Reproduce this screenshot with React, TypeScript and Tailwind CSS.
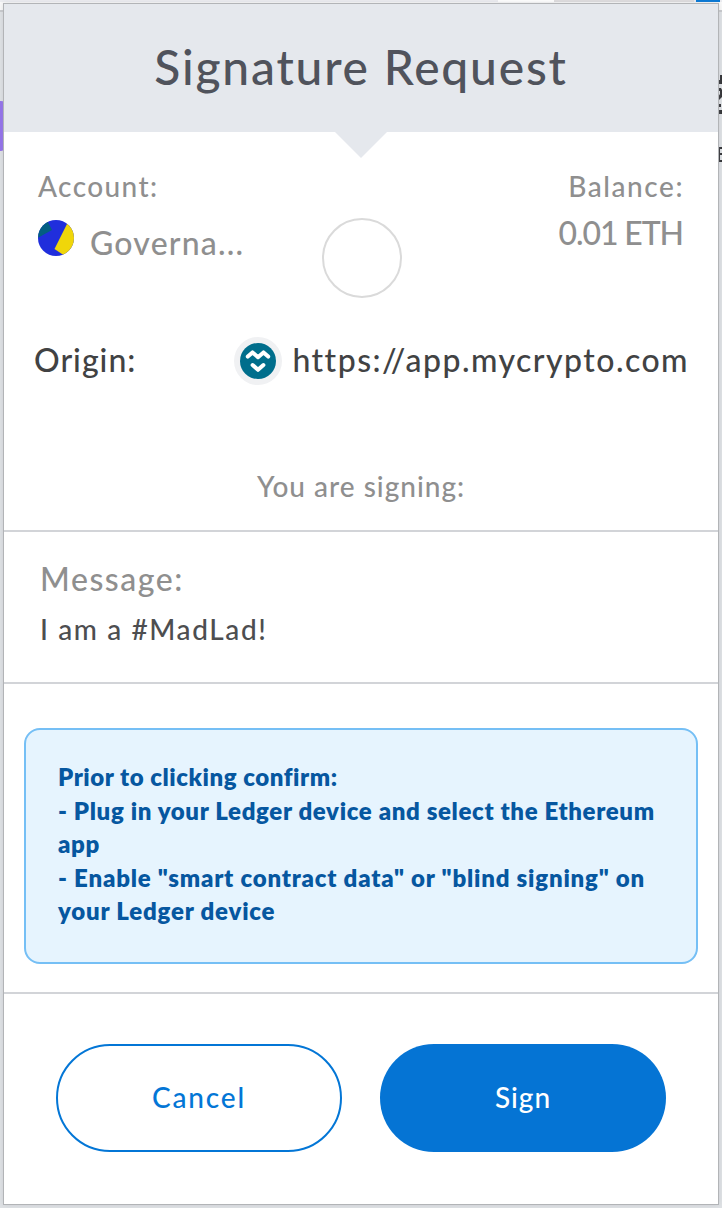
import React from "react";

function AccountIcon() {
  return (
    <svg width="36" height="36" viewBox="0 0 36 36" className="mt-[5px] shrink-0">
      <defs>
        <clipPath id="account-circle">
          <circle cx="18" cy="18" r="18" />
        </clipPath>
      </defs>
      <g clipPath="url(#account-circle)">
        <rect width="36" height="36" fill="#202edc" />
        <path d="M-4 20 L14 10 L8 -2 L-4 -2Z" fill="#035e82" />
        <path d="M29.500 3 L16.500 29 L27 36 L40 36 L40 3Z" fill="#f0d60a" />
      </g>
    </svg>
  );
}

function SiteIcon() {
  return (
    <svg width="48" height="48" viewBox="0 0 48 48" className="shrink-0">
      <circle cx="24" cy="24" r="24" fill="#f0f1f3" />
      <circle cx="24" cy="24" r="18" fill="#006e8c" />
      <g fill="none" stroke="#fff" strokeWidth="4" strokeLinecap="round" strokeLinejoin="round">
        <path d="M13.800 19.600 L18.500 15.400 L24 20.200 L29.500 15.400 L34.200 19.600" />
        <path d="M18.600 28 L24 32.800 L29.400 28" />
      </g>
    </svg>
  );
}

function Backdrop() {
  return (
    <div className="absolute inset-0 overflow-hidden bg-[#dfe2e5]">
      <div className="absolute inset-x-0 top-0 h-[2px] bg-[#ecedf1]" />
      <div className="absolute left-[498px] top-0 h-[2px] w-[56px] bg-white" />
      <div className="absolute left-[554px] top-0 h-[2px] w-[140px] bg-[#dfdddf]" />
      <div className="absolute left-[696px] top-0 h-[2px] w-[24px] bg-[#0376d6]" />
      <div className="absolute inset-x-0 top-[2px] h-[8px] bg-[#fafafa]" />
      <div className="absolute inset-x-0 top-[10px] h-[2px] bg-[#c8cacd]" />
      <div className="absolute -left-2 top-[101px] h-[50px] w-[14px] rounded-[5px] bg-[#9270ec]" />
      <svg className="absolute left-[718px] top-[72px]" width="4" height="92" viewBox="0 0 4 92" fill="#303134">
        <path d="M2 3h2v9H0V8h2zM0 16h3l1 2v7l-4 4v-4l2-3v-3H0zM0 32h3v3H0zM0 38h4v4H0z" />
        <path d="M0 75h4v2H2v4h2v2H2v5h2v2H0z" />
      </svg>
    </div>
  );
}

export default function App() {
  return (
    <div className="relative h-[1208px] w-[722px] overflow-hidden p-1 font-['Lato','Liberation_Sans',sans-serif] font-medium">
      <Backdrop />
      <main className="relative flex h-[1200px] w-[714px] flex-col bg-white shadow-[0_0_0_1px_#b2b4b7,0_0_5px_1px_#a0a3a650]">
        <header className="relative flex h-32 shrink-0 items-center justify-center bg-[#e5e8ed]">
          <h1 className="-mt-[2px] whitespace-nowrap text-[48px] font-medium leading-[126px] tracking-[1.78px] text-[#50535c]">Signature Request</h1>
          <svg className="absolute left-[330px] top-32" width="54" height="27" viewBox="0 0 54 27">
            <path d="M1 0H53L27 26Z" fill="#e5e8ed" />
          </svg>
        </header>

        <section className="flex h-[182px] shrink-0 justify-between pl-[34px] pr-[34px] pt-[34px] text-[#8f8f8f]">
          <div className="w-[284px]">
            <div className="text-[28px] leading-10 tracking-[1.4px]">Account:</div>
            <div className="mt-[9px] flex">
              <AccountIcon />
              <span className="ml-4 mt-[8px] text-[32px] leading-10 tracking-[1.2px]">Governa...</span>
            </div>
          </div>
          <div className="mt-[52px] size-20 shrink-0 rounded-full border-2 border-[#dadada]" />
          <div className="w-[282px] text-right">
            <div className="text-[28px] leading-10 tracking-[1.55px]">Balance:</div>
            <div className="mt-[7px] pr-px text-[32px] leading-10 tracking-[-1.1px]">0.01 ETH</div>
          </div>
        </section>

        <section className="flex h-[92px] shrink-0 items-center justify-between pl-[30px] pr-[29px] pt-[2px] text-[32px] leading-10 text-[#414243]">
          <span className="-mt-[2px] tracking-[1px]">Origin:</span>
          <span className="flex items-center gap-[10px]">
            <SiteIcon />
            <span className="-mt-[2px] whitespace-nowrap tracking-[1.46px]">https://app.mycrypto.com</span>
          </span>
        </section>

        <div className="h-[124px] shrink-0 pt-[60px] text-center text-[28px] leading-10 tracking-[1px] text-[#8f8f8f]">You are signing:</div>

        <section className="h-[154px] shrink-0 border-y-2 border-[#d2d4d8] pl-[36px] pt-[27px]">
          <div className="text-[32px] leading-10 tracking-[1.55px] text-[#8f8f8f]">Message:</div>
          <div className="mt-[10px] text-[28px] leading-10 tracking-[1.6px] text-[#4d4e50]">I am a #MadLad!</div>
        </section>

        <section className="h-[310px] shrink-0 border-b-2 border-[#d2d4d8] px-5 pt-11">
          <div className="h-[236px] rounded-2xl border-2 border-[#75bff5] bg-[#e6f4fe] px-8 pt-[30px] text-[24px] font-extrabold leading-[33.500px] tracking-[0.65px] text-[#0657a0]">
            <p className="whitespace-nowrap tracking-[0.55px]">Prior to clicking confirm:</p>
            <p className="whitespace-nowrap">- Plug in your Ledger device and select the Ethereum<br />app</p>
            <p className="whitespace-nowrap tracking-[0.79px]">- Enable "smart contract data" or "blind signing" on<br />your Ledger device</p>
          </div>
        </section>

        <footer className="flex justify-between px-[52px] pt-[50px] text-[28px]">
          <button className="h-[108px] w-[286px] rounded-full border-2 border-[#0376d6] pb-[2px] tracking-[1.8px] text-[#0376d6]">Cancel</button>
          <button className="h-[108px] w-[286px] rounded-full bg-[#0574d4] pb-[2px] tracking-[1px] text-white">Sign</button>
        </footer>
      </main>
    </div>
  );
}
